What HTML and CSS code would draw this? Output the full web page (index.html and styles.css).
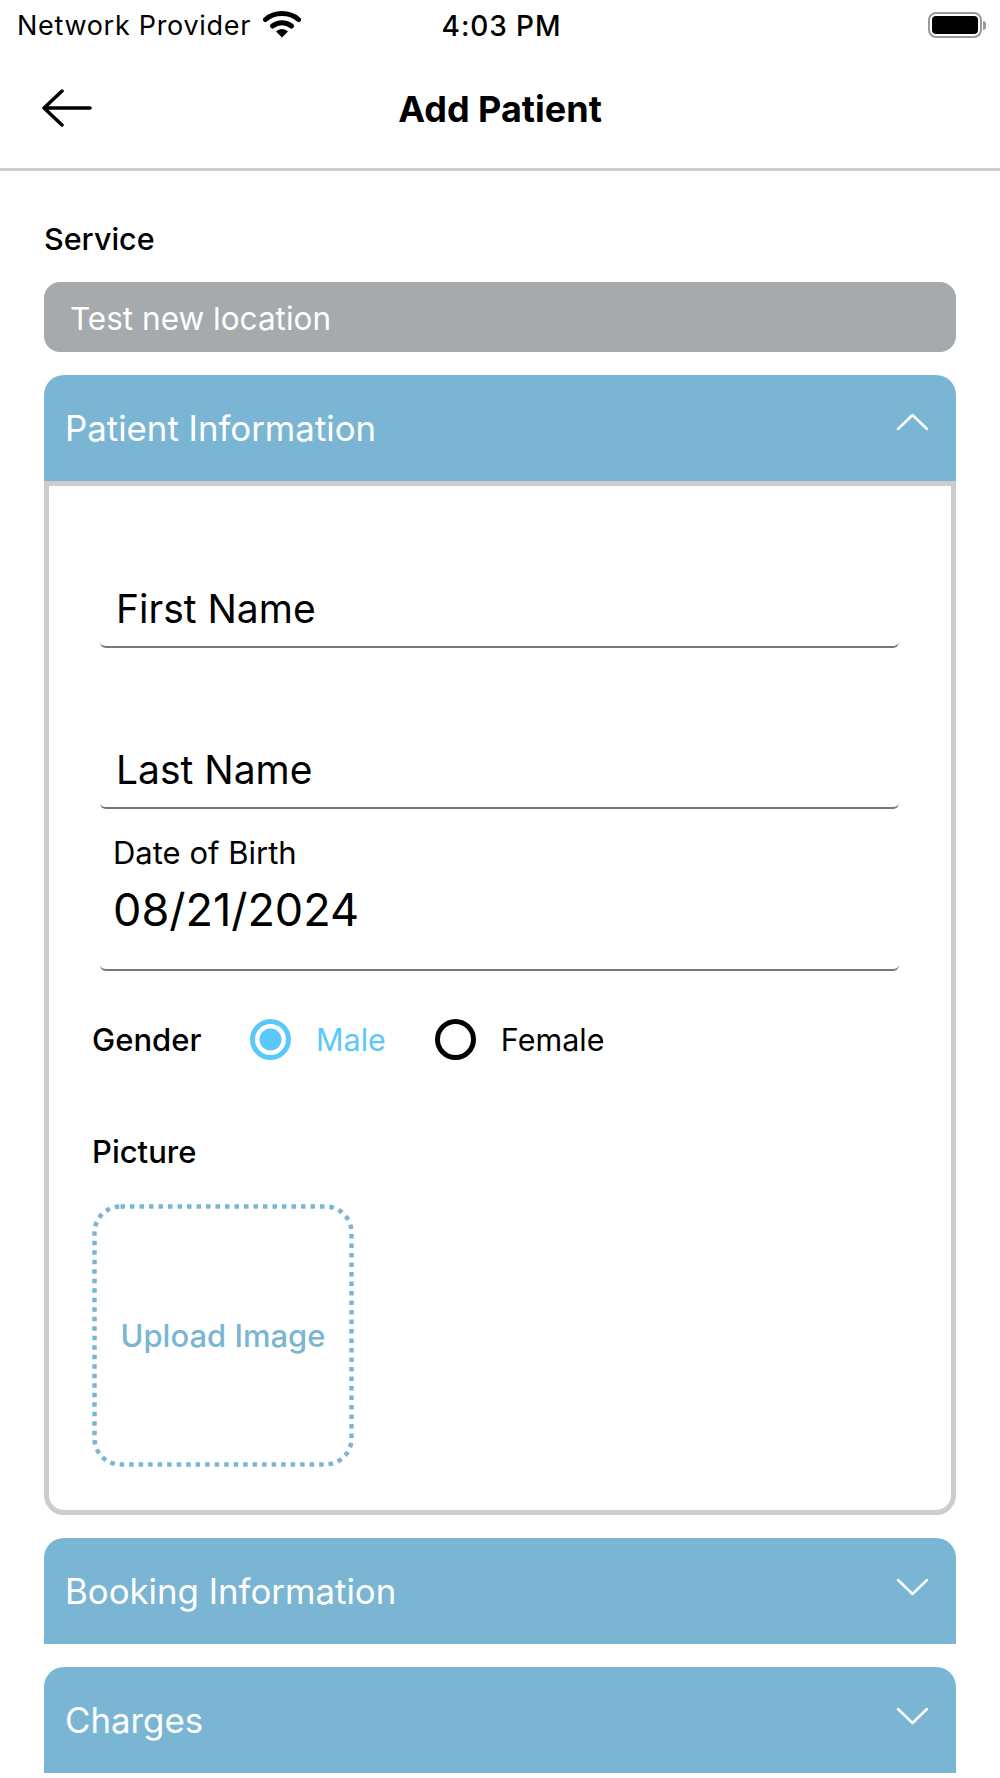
FILE: index.html
```html
<!DOCTYPE html>
<html lang="en">
<head>
  <meta charset="UTF-8">
  <title>Add Patient</title>
  <link rel="stylesheet" href="styles.css">
</head>
<body>
  <div class="status-bar">
    <div class="status-left">
      <span>Network Provider</span>
      <svg class="wifi" width="38" height="28" viewBox="0 0 38 28">
        <path d="M2.5 9.5C11.5 1.5 26.5 1.5 35.5 9.5" fill="none" stroke="#000" stroke-width="5" stroke-linecap="round"/>
        <path d="M9.5 16C15 11.5 23 11.5 28.5 16" fill="none" stroke="#000" stroke-width="5" stroke-linecap="round"/>
        <path d="M13 21.5C16.5 18 21.5 18 25 21.5L19 27.5Z" fill="#000"/>
      </svg>
    </div>
    <div class="status-time">4:03 PM</div>
    <div class="battery">
      <div class="battery-body"><div class="battery-fill"></div></div>
      <div class="battery-cap"></div>
    </div>
  </div>

  <div class="nav-bar">
    <svg class="back" width="50" height="38" viewBox="0 0 50 38">
      <path d="M2 19H48M20 2L2 19L20 36" fill="none" stroke="#000" stroke-width="3.5" stroke-linecap="round" stroke-linejoin="round"/>
    </svg>
    <h1>Add Patient</h1>
  </div>

  <main class="content">
    <div class="field-title">Service</div>
    <div class="service-box">Test new location</div>

    <section class="panel">
      <div class="panel-head">
        <span>Patient Information</span>
        <svg class="chevron" width="34" height="20" viewBox="0 0 34 20"><path d="M3 17L17.5 3L32 17" fill="none" stroke="#fff" stroke-width="2.5" stroke-linecap="round" stroke-linejoin="round"/></svg>
      </div>
      <div class="panel-body">
        <div class="text-input first">First Name</div>
        <div class="text-input second">Last Name</div>
        <div class="date-input">
          <div class="date-label">Date of Birth</div>
          <div class="date-value">08/21/2024</div>
        </div>

        <div class="gender-row">
          <span class="gender-title">Gender</span>
          <span class="radio checked"></span>
          <span class="radio-label blue">Male</span>
          <span class="radio"></span>
          <span class="radio-label">Female</span>
        </div>

        <div class="picture-title">Picture</div>
        <div class="upload-box">
          <svg class="upload-border" width="262" height="263" viewBox="0 0 262 263">
            <rect x="2.5" y="2.5" width="257" height="258" rx="26" fill="none" stroke="#7ab6d3" stroke-width="4.5" stroke-dasharray="4.5 5"/>
          </svg>
          Upload Image
        </div>
      </div>
    </section>

    <section class="panel">
      <div class="panel-head closed">
        <span>Booking Information</span>
        <svg class="chevron" width="34" height="20" viewBox="0 0 34 20"><path d="M3 3L17.5 17L32 3" fill="none" stroke="#fff" stroke-width="2.5" stroke-linecap="round" stroke-linejoin="round"/></svg>
      </div>
    </section>

    <section class="panel">
      <div class="panel-head closed">
        <span>Charges</span>
        <svg class="chevron" width="34" height="20" viewBox="0 0 34 20"><path d="M3 3L17.5 17L32 3" fill="none" stroke="#fff" stroke-width="2.5" stroke-linecap="round" stroke-linejoin="round"/></svg>
      </div>
    </section>
  </main>
</body>
</html>
```

FILE: styles.css
```css
* { box-sizing: border-box; }
html, body { margin: 0; padding: 0; }
body { width: 1000px; height: 1778px; overflow: hidden; background: #fff; color: #000; font-family: Inter, "Liberation Sans", sans-serif; }

.status-bar { height: 50px; display: grid; grid-template-columns: 1fr auto 1fr; align-items: center; padding: 0 14px 0 17px; }
.status-left { display: flex; align-items: center; gap: 12px; font-size: 27px; letter-spacing: 0.7px; padding-top: 1px; }
.wifi { margin-top: -4px; }
.status-time { font-size: 28px; font-weight: 500; letter-spacing: 0.9px; padding-top: 1px; }
.battery { justify-self: end; display: flex; align-items: center; gap: 1px; }
.battery-body { width: 54px; height: 26px; border: 2px solid #9a9a9a; border-radius: 8px; padding: 2px; }
.battery-fill { height: 100%; background: #000; border-radius: 4px; }
.battery-cap { width: 3px; height: 9px; background: #9a9a9a; border-radius: 0 3px 3px 0; }

.nav-bar { height: 121px; border-bottom: 3px solid #cfcfcf; display: flex; align-items: center; justify-content: center; position: relative; }
.nav-bar h1 { margin: 0; font-size: 36px; font-weight: 700; }
.back { position: absolute; left: 42px; top: 39px; }

.content { padding: 0 44px; }
.field-title { font-size: 30.5px; font-weight: 500; line-height: 33px; margin-top: 51px; }
.service-box { height: 70px; margin-top: 27px; background: #a6aaad; color: #fff; border-radius: 16px; font-size: 31.5px; font-weight: 400; line-height: 73px; padding-left: 26px; }

.panel { margin-top: 23px; }
.panel-head { height: 106px; background: #7ab6d3; color: #fff; border-radius: 20px 20px 0 0; display: flex; align-items: center; justify-content: space-between; padding: 0 27px 0 21px; font-size: 34.8px; font-weight: 400; }
.chevron { margin-top: -12px; }
.closed .chevron { margin-top: -8px; }

.panel-body { height: 1034px; border: 5px solid #cdcdcd; border-radius: 0 0 20px 20px; padding: 0 52px 0 51px; }
.text-input { font-size: 39px; height: 71px; line-height: 64px; padding-left: 16px; border-bottom: 2px solid #777; border-radius: 0 0 6px 6px; }
.text-input.first { margin-top: 91px; }
.text-input.second { margin-top: 90px; }
.date-input { height: 162px; border-bottom: 2px solid #777; border-radius: 0 0 6px 6px; padding: 27px 0 0 13px; }
.date-label { font-size: 31px; line-height: 34px; }
.date-value { font-size: 45px; line-height: 56px; margin-top: 12px; }

.gender-row { display: flex; align-items: center; margin: 48px 0 0 -8px; height: 41px; font-size: 30.5px; }
.gender-title { font-size: 31px; font-weight: 500; width: 158px; }
.radio { width: 41px; height: 41px; border-radius: 50%; border: 5px solid #000; flex: none; }
.radio.checked { border-color: #5ac8fa; background: radial-gradient(circle, #5ac8fa 0 10.5px, #fff 11.5px); }
.radio-label { margin: 0 49px 0 25px; }
.radio-label.blue { color: #5ac8fa; }

.picture-title { font-size: 31px; font-weight: 500; line-height: 33px; margin: 75px 0 0 -8px; }
.upload-box { position: relative; width: 262px; height: 263px; margin: 36px 0 0 -8px; color: #7ab6d3; font-size: 31px; font-weight: 500; display: flex; align-items: center; justify-content: center; }
.upload-border { position: absolute; top: 0; left: 0; }
```
